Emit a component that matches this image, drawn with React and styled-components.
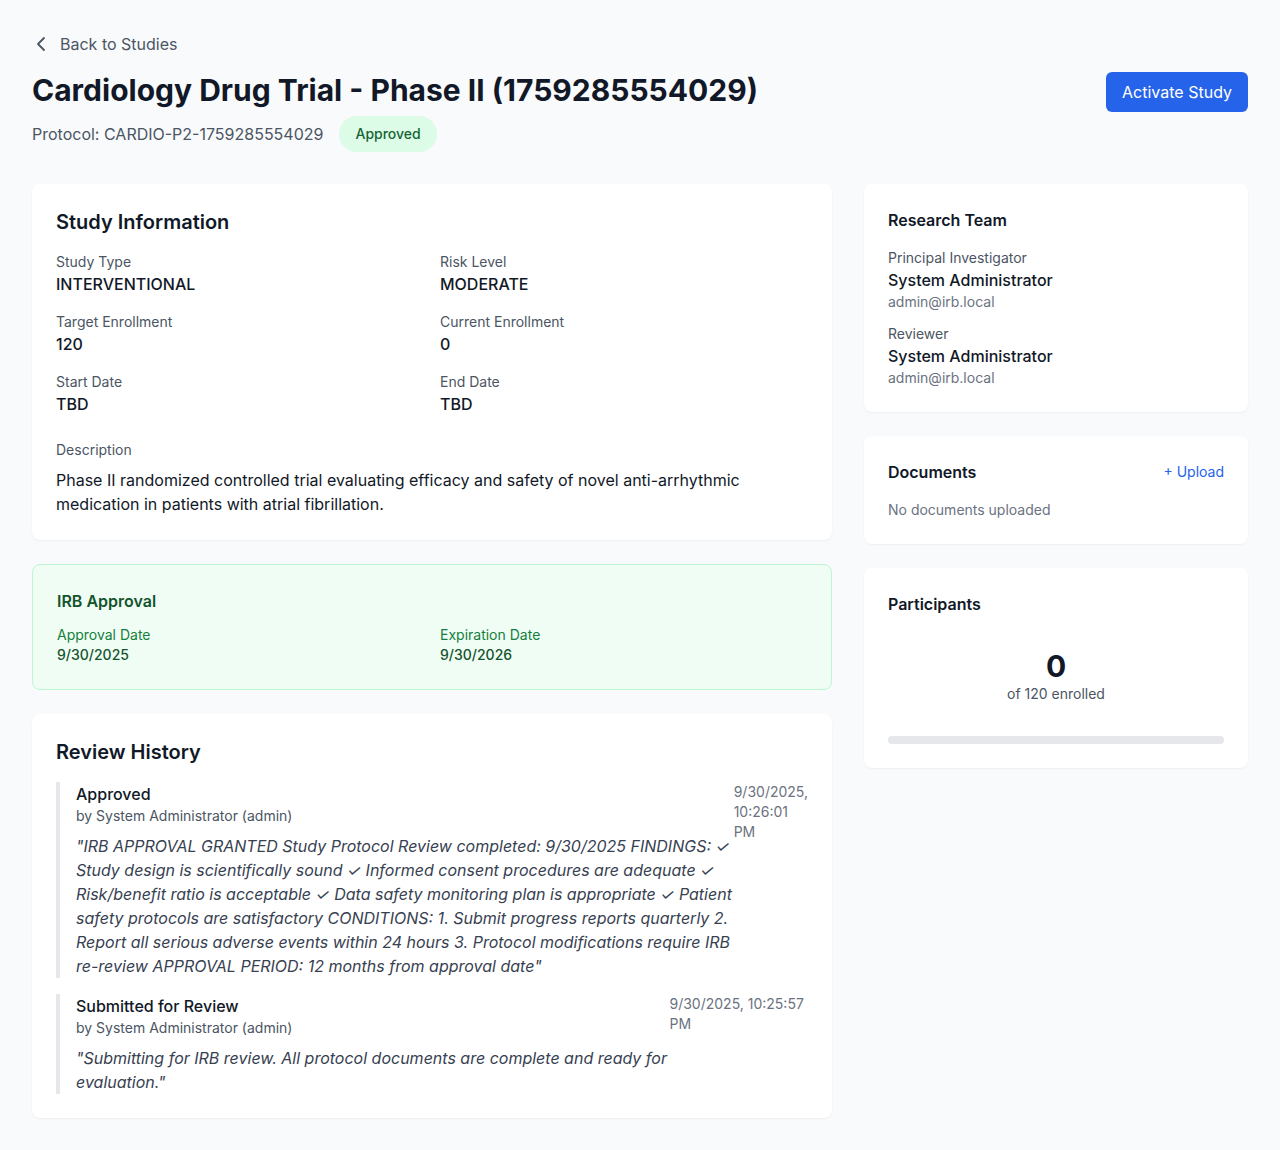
import React from 'react';
import styled, { createGlobalStyle } from 'styled-components';

const GlobalStyle = createGlobalStyle`
  * { box-sizing: border-box; }
  body {
    margin: 0;
    background: #f9fafb;
    font-family: Inter, "Noto Sans", sans-serif;
    color: #111827;
  }
`;

const Page = styled.div`
  padding: 32px;
  min-height: 1150px;
`;

const BackLink = styled.a`
  display: inline-flex;
  align-items: center;
  gap: 8px;
  font-size: 16px;
  line-height: 24px;
  color: #4b5563;
  text-decoration: none;
  margin-bottom: 16px;
`;

const Header = styled.div`
  display: flex;
  justify-content: space-between;
  align-items: flex-start;
  margin-bottom: 32px;
`;

const Title = styled.h1`
  margin: 0;
  font-size: 30px;
  line-height: 36px;
  font-weight: 700;
  color: #111827;
`;

const SubRow = styled.div`
  display: flex;
  align-items: center;
  gap: 16px;
  margin-top: 8px;
  font-size: 16px;
  color: #4b5563;
`;

const Badge = styled.span`
  display: inline-block;
  padding: 8px 16px;
  border-radius: 9999px;
  background: #dcfce7;
  color: #166534;
  font-size: 14px;
  line-height: 20px;
  font-weight: 500;
`;

const PrimaryButton = styled.button`
  background: #2563eb;
  color: #fff;
  border: none;
  border-radius: 6px;
  padding: 8px 16px;
  font-family: inherit;
  font-size: 16px;
  line-height: 24px;
  cursor: pointer;
`;

const Layout = styled.div`
  display: grid;
  grid-template-columns: repeat(3, minmax(0, 1fr));
  gap: 32px;
  align-items: start;
`;

const Column = styled.div`
  grid-column: ${(p) => (p.$main ? 'span 2' : 'span 1')};
  display: flex;
  flex-direction: column;
  gap: 24px;
  min-width: 0;
`;

const Card = styled.section`
  background: ${(p) => (p.$green ? '#f0fdf4' : '#fff')};
  border: ${(p) => (p.$green ? '1px solid #bbf7d0' : 'none')};
  border-radius: 8px;
  box-shadow: ${(p) => (p.$green ? 'none' : '0 1px 2px rgba(0, 0, 0, 0.05)')};
  padding: 24px;
`;

const CardTitle = styled.h2`
  margin: 0 0 16px;
  font-size: 20px;
  line-height: 28px;
  font-weight: 600;
  color: #111827;
`;

const SideTitle = styled.h3`
  margin: 0;
  font-size: 16px;
  line-height: 24px;
  font-weight: 600;
  color: ${(p) => (p.$green ? '#14532d' : '#111827')};
`;

const InfoGrid = styled.div`
  display: grid;
  grid-template-columns: 1fr 1fr;
  gap: 16px;
`;

const Label = styled.div`
  font-size: 14px;
  line-height: 20px;
  color: ${(p) => (p.$green ? '#15803d' : '#4b5563')};
`;

const Value = styled.div`
  font-size: 16px;
  line-height: 24px;
  font-weight: 500;
  color: #111827;
`;

const Description = styled.div`
  margin-top: 24px;

  ${Label} {
    margin-bottom: 8px;
  }
`;

const Paragraph = styled.p`
  margin: 0;
  font-size: 16px;
  line-height: 24px;
  color: #111827;
`;

const GreenGrid = styled.div`
  display: grid;
  grid-template-columns: 1fr 1fr;
  gap: 16px;
  margin-top: 12px;
`;

const GreenValue = styled.div`
  font-size: 14px;
  line-height: 20px;
  font-weight: 500;
  color: #14532d;
`;

const HistoryList = styled.div`
  display: flex;
  flex-direction: column;
  gap: 16px;
`;

const Entry = styled.div`
  border-left: 4px solid #e5e7eb;
  padding-left: 16px;
  display: flex;
  justify-content: space-between;
  align-items: flex-start;
`;

const EntryTitle = styled.div`
  font-size: 16px;
  line-height: 24px;
  font-weight: 500;
  color: #111827;
`;

const EntryBy = styled.div`
  font-size: 14px;
  line-height: 20px;
  color: #4b5563;
`;

const Comment = styled.p`
  margin: 8px 0 0;
  font-size: 16px;
  line-height: 24px;
  font-style: italic;
  color: #374151;
`;

const EntryDate = styled.div`
  font-size: 14px;
  line-height: 20px;
  color: #6b7280;
`;

const TeamList = styled.div`
  display: flex;
  flex-direction: column;
  gap: 12px;
  margin-top: 16px;
`;

const Email = styled.div`
  font-size: 14px;
  line-height: 20px;
  color: #6b7280;
`;

const CardHead = styled.div`
  display: flex;
  justify-content: space-between;
  align-items: center;
  margin-bottom: 16px;
`;

const LinkButton = styled.button`
  background: none;
  border: none;
  padding: 0;
  font-family: inherit;
  font-size: 14px;
  line-height: 20px;
  color: #2563eb;
  cursor: pointer;
`;

const Muted = styled.div`
  font-size: 14px;
  line-height: 20px;
  color: #6b7280;
`;

const Counter = styled.div`
  text-align: center;
  padding: 16px 0;
  margin-top: 16px;
`;

const BigNumber = styled.div`
  font-size: 30px;
  line-height: 36px;
  font-weight: 700;
  color: #111827;
`;

const Track = styled.div`
  height: 8px;
  border-radius: 9999px;
  background: #e5e7eb;
  margin-top: 16px;
  overflow: hidden;
`;

const Fill = styled.div`
  height: 100%;
  background: #2563eb;
`;

const info = [
  { label: 'Study Type', value: 'INTERVENTIONAL' },
  { label: 'Risk Level', value: 'MODERATE' },
  { label: 'Target Enrollment', value: '120' },
  { label: 'Current Enrollment', value: '0' },
  { label: 'Start Date', value: 'TBD' },
  { label: 'End Date', value: 'TBD' },
];

const history = [
  {
    id: 1,
    action: 'Approved',
    by: 'by System Administrator (admin)',
    date: '9/30/2025, 10:26:01 PM',
    comment:
      '"IRB APPROVAL GRANTED Study Protocol Review completed: 9/30/2025 FINDINGS: ✓ Study design is scientifically sound ✓ Informed consent procedures are adequate ✓ Risk/benefit ratio is acceptable ✓ Data safety monitoring plan is appropriate ✓ Patient safety protocols are satisfactory CONDITIONS: 1. Submit progress reports quarterly 2. Report all serious adverse events within 24 hours 3. Protocol modifications require IRB re-review APPROVAL PERIOD: 12 months from approval date"',
  },
  {
    id: 2,
    action: 'Submitted for Review',
    by: 'by System Administrator (admin)',
    date: '9/30/2025, 10:25:57 PM',
    comment:
      '"Submitting for IRB review. All protocol documents are complete and ready for evaluation."',
  },
];

const team = [
  { role: 'Principal Investigator', name: 'System Administrator', email: 'admin@irb.local' },
  { role: 'Reviewer', name: 'System Administrator', email: 'admin@irb.local' },
];

const ChevronLeft = () => (
  <svg width="20" height="20" viewBox="0 0 20 20" fill="none" stroke="#4b5563" strokeWidth="1.8" strokeLinecap="round" strokeLinejoin="round">
    <path d="M12 4 L6 10 L12 16" />
  </svg>
);

const App = () => {
  const enrolled = 0;
  const target = 120;
  return (
    <Page>
      <GlobalStyle />
      <BackLink href="#">
        <ChevronLeft />
        Back to Studies
      </BackLink>
      <Header>
        <div>
          <Title>Cardiology Drug Trial - Phase II (1759285554029)</Title>
          <SubRow>
            <span>Protocol: CARDIO-P2-1759285554029</span>
            <Badge>Approved</Badge>
          </SubRow>
        </div>
        <PrimaryButton>Activate Study</PrimaryButton>
      </Header>

      <Layout>
        <Column $main>
          <Card>
            <CardTitle>Study Information</CardTitle>
            <InfoGrid>
              {info.map(({ label, value }) => (
                <div key={label}>
                  <Label>{label}</Label>
                  <Value>{value}</Value>
                </div>
              ))}
            </InfoGrid>
            <Description>
              <Label>Description</Label>
              <Paragraph>
                Phase II randomized controlled trial evaluating efficacy and safety of novel
                anti-arrhythmic medication in patients with atrial fibrillation.
              </Paragraph>
            </Description>
          </Card>

          <Card $green>
            <SideTitle $green>IRB Approval</SideTitle>
            <GreenGrid>
              <div>
                <Label $green>Approval Date</Label>
                <GreenValue>9/30/2025</GreenValue>
              </div>
              <div>
                <Label $green>Expiration Date</Label>
                <GreenValue>9/30/2026</GreenValue>
              </div>
            </GreenGrid>
          </Card>

          <Card>
            <CardTitle>Review History</CardTitle>
            <HistoryList>
              {history.map((h) => (
                <Entry key={h.id}>
                  <div>
                    <EntryTitle>{h.action}</EntryTitle>
                    <EntryBy>{h.by}</EntryBy>
                    <Comment>{h.comment}</Comment>
                  </div>
                  <EntryDate>{h.date}</EntryDate>
                </Entry>
              ))}
            </HistoryList>
          </Card>
        </Column>

        <Column>
          <Card>
            <SideTitle>Research Team</SideTitle>
            <TeamList>
              {team.map((m) => (
                <div key={m.role}>
                  <Label>{m.role}</Label>
                  <Value>{m.name}</Value>
                  <Email>{m.email}</Email>
                </div>
              ))}
            </TeamList>
          </Card>

          <Card>
            <CardHead>
              <SideTitle>Documents</SideTitle>
              <LinkButton>+ Upload</LinkButton>
            </CardHead>
            <Muted>No documents uploaded</Muted>
          </Card>

          <Card>
            <SideTitle>Participants</SideTitle>
            <Counter>
              <BigNumber>{enrolled}</BigNumber>
              <Label>of {target} enrolled</Label>
            </Counter>
            <Track>
              <Fill style={{ width: `${(enrolled / target) * 100}%` }} />
            </Track>
          </Card>
        </Column>
      </Layout>
    </Page>
  );
};

export default App;
